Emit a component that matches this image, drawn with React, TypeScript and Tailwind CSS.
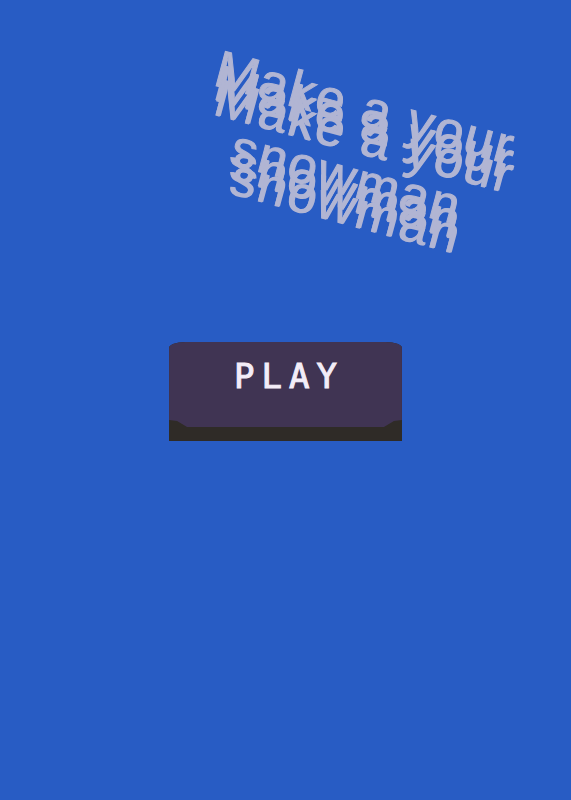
interface PlayButtonProps {
  onPlay?: () => void;
}

function Title() {
  return (
    <h1 className="rotate-[15deg] text-center font-['Liberation_Sans',Arial,sans-serif] text-[52px] leading-[72px] tracking-[2px] text-[#b1b5d3] [-webkit-text-stroke:1px_#b1b5d3] [text-shadow:3px_14px_0_#b1b5d3,4px_14px_0_#b1b5d3,4px_15px_0_#b1b5d3,7px_28px_0_#b1b5d3,8px_28px_0_#b1b5d3,7px_29px_0_#b1b5d3]">
      Make a your
      <br />
      snowman
    </h1>
  );
}

function PlayButton({ onPlay }: PlayButtonProps) {
  return (
    <button
      type="button"
      onClick={onPlay}
      className="cursor-pointer bg-[#2f2b27] pb-[14px] [border-radius:16px_16px_0_0/6px_6px_0_0]"
    >
      {/* Raised face, the darker base shows below it */}
      <span className="block bg-[#403453] pt-3 pr-[58px] pb-[29px] pl-[65px] font-['DejaVu_Sans_Mono','Liberation_Mono',monospace] text-[34px] leading-[44px] tracking-[7px] text-[#f3edf8] [-webkit-text-stroke:1px_#f3edf8] [border-radius:16px_16px_0_0/6px_6px_0_0] [clip-path:polygon(0_0,100%_0,100%_calc(100%_-_7px),calc(100%_-_8px)_calc(100%_-_6px),calc(100%_-_18px)_100%,18px_100%,8px_calc(100%_-_6px),0_calc(100%_-_7px))]">
        PLAY
      </span>
    </button>
  );
}

export default function App() {
  return (
    <main className="flex min-h-screen flex-col items-center overflow-hidden bg-[#285cc4] pt-[70px]">
      <div className="pl-[142px]">
        <Title />
      </div>
      <div className="mt-32">
        <PlayButton />
      </div>
    </main>
  );
}
